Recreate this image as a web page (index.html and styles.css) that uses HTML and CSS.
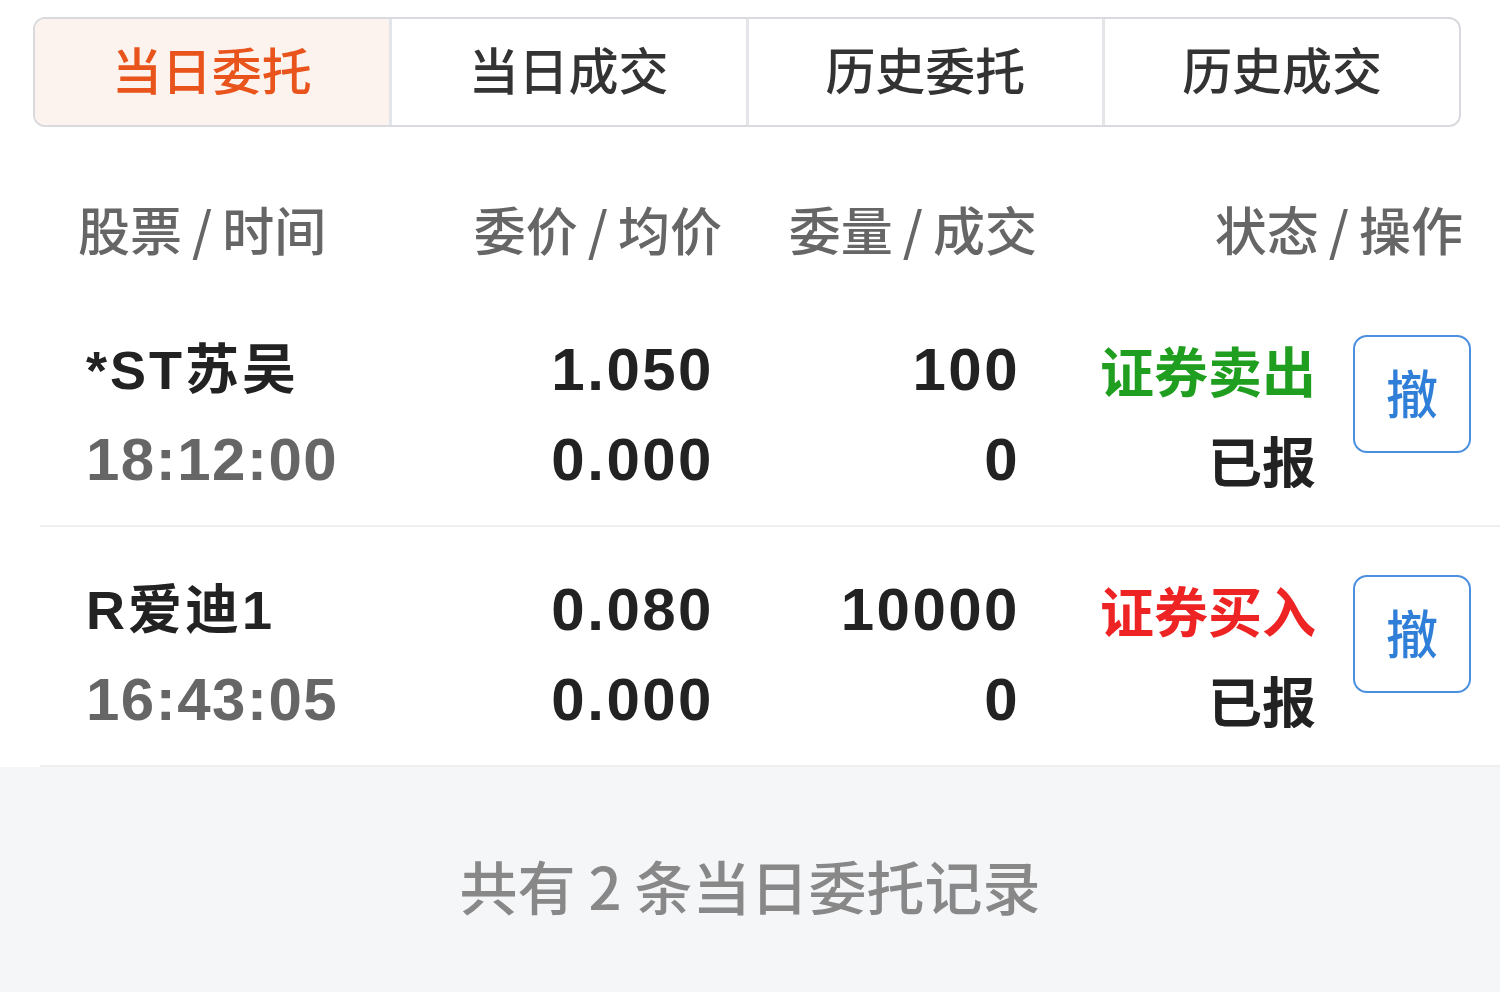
FILE: index.html
```html
<!DOCTYPE html>
<html lang="zh-CN">
<head>
<meta charset="utf-8">
<title>当日委托</title>
<link rel="stylesheet" href="styles.css">
</head>
<body>
<div class="page">
  <div class="tabs">
    <div class="tab active">当日委托</div>
    <div class="tab">当日成交</div>
    <div class="tab">历史委托</div>
    <div class="tab">历史成交</div>
  </div>

  <div class="head">
    <div class="h h1">股票<span class="sl">/</span>时间</div>
    <div class="h h2">委价<span class="sl">/</span>均价</div>
    <div class="h h3">委量<span class="sl">/</span>成交</div>
    <div class="h h4">状态<span class="sl">/</span>操作</div>
  </div>

  <div class="list">
    <div class="row">
      <div class="cell c1">
        <div class="name">*ST苏吴</div>
        <div class="time">18:12:00</div>
      </div>
      <div class="cell c2">
        <div class="num">1.050</div>
        <div class="num">0.000</div>
      </div>
      <div class="cell c3">
        <div class="num">100</div>
        <div class="num">0</div>
      </div>
      <div class="cell c4">
        <div class="dir sell">证券卖出</div>
        <div class="state">已报</div>
      </div>
      <div class="cell c5"><div class="cancel">撤</div></div>
    </div>
    <div class="row">
      <div class="cell c1">
        <div class="name">R爱迪1</div>
        <div class="time">16:43:05</div>
      </div>
      <div class="cell c2">
        <div class="num">0.080</div>
        <div class="num">0.000</div>
      </div>
      <div class="cell c3">
        <div class="num">10000</div>
        <div class="num">0</div>
      </div>
      <div class="cell c4">
        <div class="dir buy">证券买入</div>
        <div class="state">已报</div>
      </div>
      <div class="cell c5"><div class="cancel">撤</div></div>
    </div>
  </div>

  <div class="footer">共有 2 条当日委托记录</div>
</div>
</body>
</html>
```

FILE: styles.css
```css
* { box-sizing: border-box; }
html, body {
  margin: 0;
  padding: 0;
  background: #ffffff;
}
body {
  font-family: "Liberation Sans", "Noto Sans CJK SC", sans-serif;
  color: #222;
}
.page {
  width: 1500px;
  height: 992px;
  display: flex;
  flex-direction: column;
  overflow: hidden;
}

/* tabs */
.tabs {
  margin: 17px 39px 0 33px;
  height: 110px;
  display: flex;
  border: 2px solid #d8dadf;
  border-radius: 12px;
  overflow: hidden;
}
.tab {
  flex: 1;
  display: flex;
  align-items: center;
  justify-content: center;
  padding-bottom: 8px;
  font-family: "Noto Sans CJK SC", sans-serif;
  font-size: 50px;
  font-weight: 500;
  color: #333;
  border-left: 3px solid #e3e5e8;
}
.tab:first-child { border-left: none; }
.tab.active {
  background: #fdf3ee;
  color: #e8541c;
}

/* header */
.head {
  display: grid;
  grid-template-columns: 372px 272px 315px 426px;
  padding: 71px 0 27px 78px;
}
.h {
  font-family: "Noto Sans CJK SC", sans-serif;
  font-size: 52px;
  font-weight: 500;
  line-height: 62px;
  color: #666;
}
.sl { margin: 0 10px; }
.h2, .h3, .h4 { text-align: right; }

/* rows */
.list {
  display: flex;
  flex-direction: column;
}
.row {
  margin-left: 40px;
  height: 240px;
  padding: 38px 0 22px 46px;
  border-bottom: 2px solid #eeeff1;
  display: grid;
  grid-template-columns: 364px 262px 306px 298px 155px;
}
.cell {
  display: flex;
  flex-direction: column;
}
.cell > div {
  height: 90px;
  line-height: 90px;
  white-space: nowrap;
}
.c2, .c3, .c4 { text-align: right; }
.name {
  font-size: 54px;
  font-weight: bold;
  letter-spacing: 3px;
  color: #222;
}
.time {
  font-size: 60px;
  font-weight: bold;
  letter-spacing: 1.5px;
  color: #666;
}
.num {
  font-size: 60px;
  font-weight: bold;
  letter-spacing: 2.5px;
  margin-right: -2px;
  color: #222;
}
.dir, .state {
  font-family: "Noto Sans CJK SC", sans-serif;
  font-size: 54px;
  font-weight: bold;
}
.sell { color: #1f9e1f; }
.buy { color: #ee2424; }
.state { color: #222; }
.c5 { padding-left: 37px; }
.cell .cancel {
  margin-top: 10px;
  width: 118px;
  height: 118px;
  line-height: 110px;
  border: 2px solid #4a8fe0;
  border-radius: 14px;
  text-align: center;
  font-family: "Noto Sans CJK SC", sans-serif;
  font-size: 52px;
  font-weight: 500;
  color: #2f7ed8;
}

/* footer */
.footer {
  flex: 1;
  background: #f4f6f8;
  display: flex;
  align-items: center;
  justify-content: center;
  padding-top: 10px;
  font-family: "Noto Sans CJK SC", sans-serif;
  font-size: 58px;
  font-weight: 500;
  color: #888;
}
```
